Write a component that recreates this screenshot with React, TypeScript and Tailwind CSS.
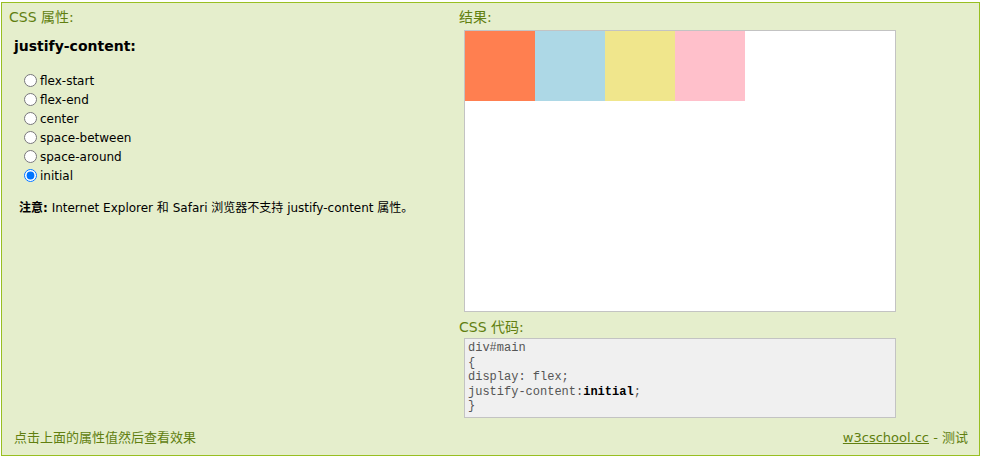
import React, { useState } from "react";

const options = [
  "flex-start",
  "flex-end",
  "center",
  "space-between",
  "space-around",
  "initial",
];

const boxes = ["bg-[#ff7f50]", "bg-[#add8e6]", "bg-[#f0e68c]", "bg-[#ffc0cb]"];

const justifyClass: Record<string, string> = {
  "flex-start": "justify-start",
  "flex-end": "justify-end",
  center: "justify-center",
  "space-between": "justify-between",
  "space-around": "justify-around",
  initial: "justify-normal",
};

const App: React.FC = () => {
  const [value, setValue] = useState("initial");

  return (
    <div className="ml-px mt-[2px] w-[979px] h-[454px] border border-[#98bf21] bg-[#e5eecc] flex flex-col font-['DejaVu_Sans','Noto_Sans_CJK_SC',sans-serif] text-black">
      <div className="flex flex-1">
        <div className="w-[450px] pl-[7px] pt-[4px]">
          <div className="text-[14px] leading-[20px] text-[#617f10]">CSS 属性:</div>
          <div className="pl-[5px]">
            <div className="mt-[9px] text-[14px] leading-[20px] font-bold">justify-content:</div>
            <div className="mt-[15px]">
              {options.map((opt) => (
                <label key={opt} className="flex items-center h-[19px] text-[12px]">
                  <input
                    type="radio"
                    name="jc"
                    checked={value === opt}
                    onChange={() => setValue(opt)}
                    className="ml-[10px] mr-[3px] w-[13px] h-[13px]"
                  />
                  {opt}
                </label>
              ))}
            </div>
            <p className="mt-[13px] ml-[5px] text-[12px] leading-[20px]">
              <b>注意:</b> Internet Explorer 和 Safari 浏览器不支持 justify-content 属性。
            </p>
          </div>
        </div>

        <div className="pl-[7px] pt-[4px]">
          <div className="text-[14px] leading-[20px] text-[#617f10]">结果:</div>
          <div className={`mt-[3px] ml-[5px] w-[432px] h-[282px] border border-[#c3c3c3] bg-white flex ${justifyClass[value]}`}>
            {boxes.map((c) => (
              <div key={c} className={`w-[70px] h-[70px] ${c}`} />
            ))}
          </div>
          <div className="mt-[5px] text-[14px] leading-[20px] text-[#617f10]">CSS 代码:</div>
          <pre className="mt-[1px] ml-[5px] w-[432px] h-[80px] border border-[#c3c3c3] bg-[#f0f0f0] pl-[3px] pt-[2px] font-['Liberation_Mono',monospace] text-[12px] leading-[14.6px] text-[#555]">
            {"div#main\n{\ndisplay: flex;\njustify-content:"}
            <b className="text-black">{value}</b>
            {";\n}"}
          </pre>
        </div>
      </div>

      <div className="flex justify-between pl-[12px] pr-[11px] pb-[7px] text-[13px] leading-[20px] text-[#617f10]">
        <span>点击上面的属性值然后查看效果</span>
        <span>
          <a href="#" className="underline">w3cschool.cc</a> - 测试
        </span>
      </div>
    </div>
  );
};

export default App;
